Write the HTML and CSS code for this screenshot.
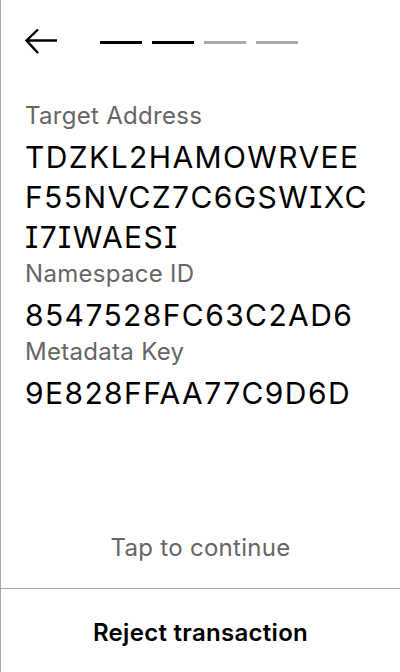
FILE: index.html
```html
<!DOCTYPE html>
<html>
<head>
<meta charset="utf-8">
<link rel="stylesheet" href="styles.css">
</head>
<body>
<div class="screen">
  <header class="header">
    <button class="back" aria-label="Back">
      <svg width="34" height="28" viewBox="0 0 34 28"><path d="M33 12.5H3M14 1.5L2.5 12.5L14 25" fill="none" stroke="#000" stroke-width="2.4"/></svg>
    </button>
    <div class="steps">
      <span class="step done"></span>
      <span class="step done"></span>
      <span class="step"></span>
      <span class="step"></span>
    </div>
  </header>
  <main class="content">
    <div class="label">Target Address</div>
    <div class="value">TDZKL2HAMOWRVEE<br>F55NVCZ7C6GSWIXC<br>I7IWAESI</div>
    <div class="label">Namespace ID</div>
    <div class="value">8547528FC63C2AD6</div>
    <div class="label">Metadata Key</div>
    <div class="value">9E828FFAA77C9D6D</div>
  </main>
  <div class="tap">Tap to continue</div>
  <footer class="footer">Reject transaction</footer>
</div>
</body>
</html>
```
FILE: styles.css
```css
html, body {
  margin: 0;
  padding: 0;
  background: #fff;
}
body {
  font-family: Inter, "Noto Sans", sans-serif;
  color: #000;
}
.screen {
  width: 400px;
  height: 672px;
  box-sizing: border-box;
  border-left: 1px solid #a8a8a8;
  display: flex;
  flex-direction: column;
}
.header {
  height: 84px;
  display: flex;
  align-items: center;
  padding-left: 23px;
}
.back {
  border: 0;
  background: none;
  padding: 0;
  width: 34px;
  height: 28px;
  display: flex;
}
.steps {
  display: flex;
  gap: 10px;
  margin-left: 42px;
}
.step {
  width: 42px;
  height: 3px;
  background: #aaa;
}
.step.done {
  background: #000;
}
.content {
  flex: 1;
  padding: 15px 20px 0 24px;
}
.label {
  font-size: 24px;
  line-height: 34px;
  letter-spacing: 0.3px;
  color: #666;
  margin-bottom: 4px;
}
.value {
  font-size: 30px;
  line-height: 40px;
  letter-spacing: 1.4px;
  font-feature-settings: "cv08";
}
.tap {
  text-align: center;
  font-size: 24px;
  line-height: 30px;
  letter-spacing: 0.3px;
  color: #666;
  margin-bottom: 25px;
}
.footer {
  border-top: 1px solid #aaa;
  height: 84px;
  box-sizing: border-box;
  padding-top: 4px;
  display: flex;
  align-items: center;
  justify-content: center;
  font-weight: 600;
  font-size: 24px;
  letter-spacing: 0.3px;
}
```
